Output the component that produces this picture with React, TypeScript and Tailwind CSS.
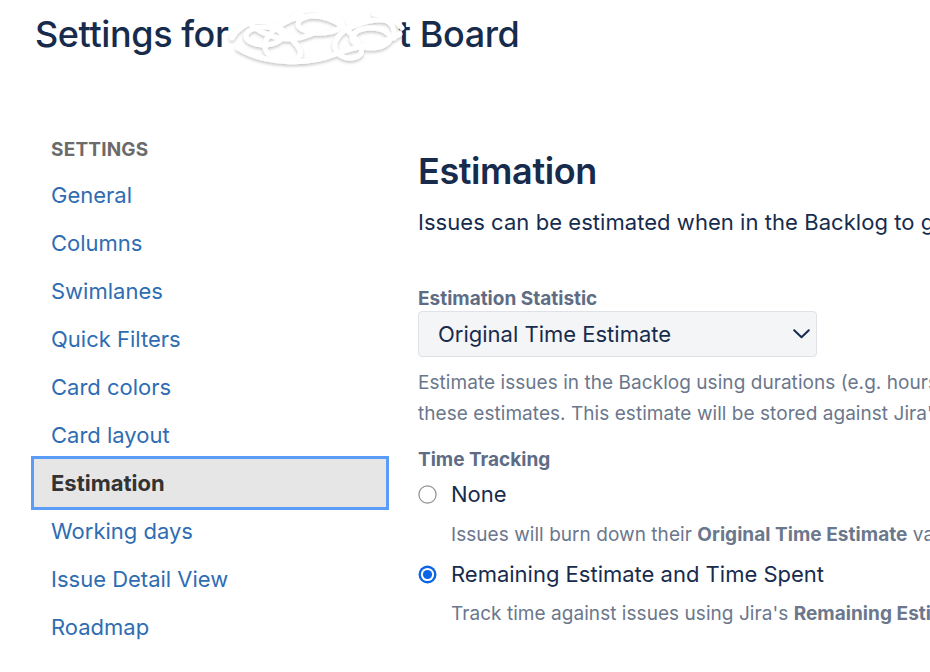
import React from "react";

const items = [
  "General",
  "Columns",
  "Swimlanes",
  "Quick Filters",
  "Card colors",
  "Card layout",
  "Estimation",
  "Working days",
  "Issue Detail View",
  "Roadmap",
];

function Radio({ checked }: { checked: boolean }) {
  return checked ? (
    <svg width="19" height="19" viewBox="0 0 19 19" className="shrink-0">
      <circle cx="9.5" cy="9.5" r="9" fill="#0a64e6" />
      <circle cx="9.5" cy="9.5" r="6.6" fill="#ffffff" />
      <circle cx="9.5" cy="9.5" r="4.6" fill="#0a64e6" />
    </svg>
  ) : (
    <svg width="19" height="19" viewBox="0 0 19 19" className="shrink-0">
      <circle cx="9.5" cy="9.5" r="8.6" fill="#ffffff" stroke="#909090" strokeWidth="1.2" />
    </svg>
  );
}

export default function App() {
  return (
    <div
      className="w-[930px] h-[672px] overflow-hidden bg-white"
      style={{ fontFamily: "Inter, 'Noto Sans', sans-serif" }}
    >
      <h1 className="pl-[35px] pt-[10px] text-[36px] leading-[48px] font-medium text-[#172B4D] whitespace-nowrap tracking-[-0.4px]">
        Settings for{" "}
        <span className="relative inline-block w-[161px] h-[30px] align-middle">
          <svg
            className="absolute left-[-14px] top-[-18px]"
            width="186"
            height="66"
            viewBox="0 0 186 66"
          >
            <defs>
              <filter id="sh" x="-10%" y="-20%" width="120%" height="150%">
                <feDropShadow dx="0" dy="2" stdDeviation="1.6" floodColor="#000" floodOpacity="0.22" />
              </filter>
            </defs>
            <g fill="none" stroke="#ffffff" strokeWidth="5" strokeLinecap="round" filter="url(#sh)">
              <path d="M8 34 C 18 16, 42 12, 58 26 S 86 54, 66 56 S 30 44, 50 26 S 100 8, 118 22 S 146 52, 128 54 S 100 34, 130 22 S 172 16, 170 34" />
              <path d="M14 44 C 40 60, 82 62, 112 50 S 152 44, 176 30" />
              <ellipse cx="96" cy="20" rx="22" ry="9" />
              <ellipse cx="147" cy="34" rx="19" ry="10" />
              <ellipse cx="40" cy="32" rx="18" ry="9" />
              <path d="M28 22 C 50 38, 72 38, 92 28" />
              <path d="M70 12 C 80 4, 96 4, 104 12" />
              <path d="M150 10 C 162 12, 172 16, 178 24" />
            </g>
          </svg>
        </span>
        t Board
      </h1>

      <div className="flex mt-[79px]">
        <nav className="ml-[34px] w-[352px] shrink-0">
          <div className="pl-[17px] text-[19px] leading-[24px] font-bold text-[#6b6b6b] tracking-[0.2px] mb-[10px] mt-[1px]">
            SETTINGS
          </div>
          <ul className="-mt-[1px]">
            {items.map((it) =>
              it === "Estimation" ? (
                <li
                  key={it}
                  className="h-[48px] pl-[17px] flex items-center bg-[#e6e6e6] outline-[3px] outline-solid outline-[#5a9cf8] text-[22px] font-bold text-[#333333]"
                >
                  {it}
                </li>
              ) : (
                <li
                  key={it}
                  className="h-[48px] pl-[17px] flex items-center text-[22px] text-[#2f6db3]"
                >
                  {it}
                </li>
              )
            )}
          </ul>
        </nav>

        <main className="ml-[32px] whitespace-nowrap text-[#172B4D]">
          <h2 className="mt-[10px] text-[36px] leading-[48px] font-semibold tracking-[-0.4px]">
            Estimation
          </h2>
          <p className="mt-[11px] text-[22px] leading-[32px] tracking-[0.05px]">
            Issues can be estimated when in the Backlog to give you a sense of how much work is planned.
          </p>

          <div className="mt-[49px] text-[19px] leading-[24px] font-bold text-[#5E6C84]">
            Estimation Statistic
          </div>
          <div className="w-[399px] h-[46px] border border-[#dfe1e6] bg-[#f4f5f7] rounded-[4px] flex items-center justify-between pl-[19px] pr-[6px]">
            <span className="text-[22px] leading-[32px]">Original Time Estimate</span>
            <svg width="17" height="10" viewBox="0 0 17 10">
              <path d="M1.2 1.2 L8.5 8.3 L15.8 1.2" fill="none" stroke="#172B4D" strokeWidth="2" strokeLinecap="round" strokeLinejoin="round" />
            </svg>
          </div>

          <div className="mt-[10px] text-[19px] leading-[31px] text-[#6B778C] tracking-[0.05px]">
            <div>Estimate issues in the Backlog using durations (e.g. hours, days, weeks) and track time spent against</div>
            <div>these estimates. This estimate will be stored against Jira's Original Time Estimate field.</div>
          </div>

          <div className="mt-[19px] text-[19px] leading-[24px] font-bold text-[#5E6C84]">
            Time Tracking
          </div>

          <div className="mt-[6px] h-[32px] flex items-center gap-[14px]">
            <Radio checked={false} />
            <span className="text-[22px] leading-[32px]">None</span>
          </div>
          <div className="mt-[14px] pl-[33px] text-[19px] leading-[22px] text-[#6B778C] tracking-[0.05px]">
            Issues will burn down their <b className="font-bold">Original Time Estimate</b> value when they are completed.
          </div>

          <div className="mt-[12px] h-[32px] flex items-center gap-[14px]">
            <Radio checked={true} />
            <span className="text-[22px] leading-[32px]">Remaining Estimate and Time Spent</span>
          </div>
          <div className="mt-[13px] pl-[33px] text-[19px] leading-[22px] text-[#6B778C] tracking-[0.05px]">
            Track time against issues using Jira's <b className="font-bold">Remaining Estimate</b> and <b className="font-bold">Time Spent</b> fields.
          </div>
        </main>
      </div>
    </div>
  );
}
